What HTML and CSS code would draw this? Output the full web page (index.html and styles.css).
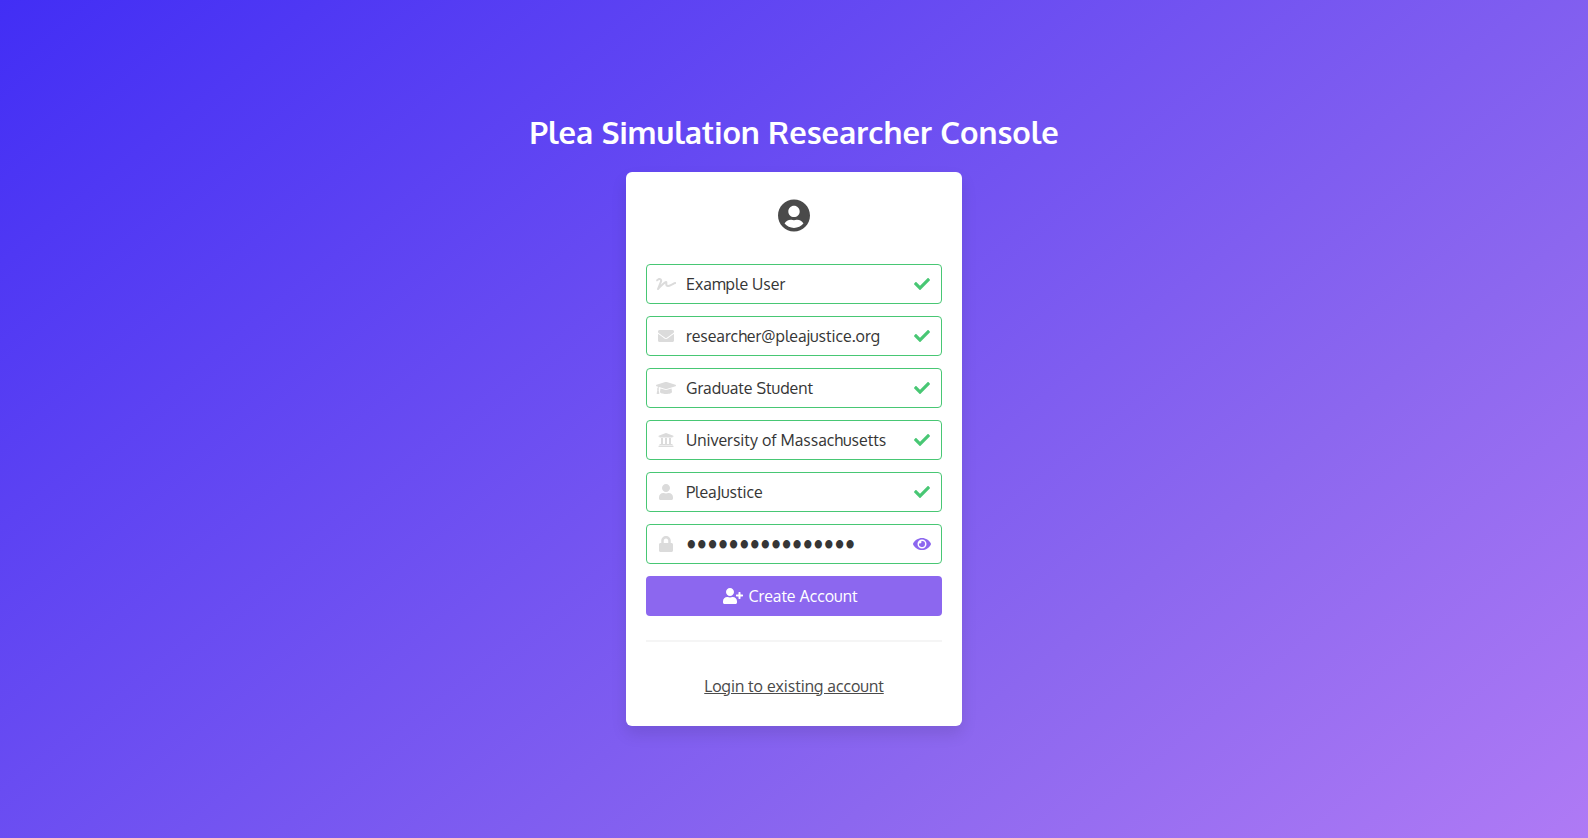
FILE: index.html
```html
<!DOCTYPE html>
<html lang="en">
<head>
<meta charset="utf-8">
<meta name="viewport" content="width=device-width, initial-scale=1">
<title>Plea Simulation Researcher Console</title>
<link rel="stylesheet" href="styles.css">
</head>
<body>
<svg class="sprite" aria-hidden="true">
  <symbol id="signature" viewBox="0 0 640 512"><path d="M623.2 192c-51.8 3.5-125.7 54.7-163.1 71.5-29.1 13.1-54.2 24.4-76.1 24.4-22.6 0-26-16.2-21.3-51.9 1.1-8 11.7-79.2-42.7-76.1-25.1 1.5-64.3 24.8-169.5 126L192 182.2c30.4-75.9-53.2-151.5-129.7-102.8L7.4 116.3C0 121-2.2 130.9 2.5 138.4l17.2 27c4.7 7.5 14.6 9.7 22.1 4.9l58-38.9c18.4-11.7 40.7 7.2 32.7 27.1L34.3 404.1C27.5 421 37 448 64 448c8.3 0 16.5-3.2 22.6-9.4 42.2-42.2 154.7-150.7 211.2-195.8-2.2 28.5-2.1 58.9 20.6 83.8 15.3 16.8 37.3 25.3 65.5 25.3 35.6 0 68-14.6 102.3-30 33-14.8 99-62.6 138.4-65.8 8.5-.7 15.2-7.3 15.2-15.8v-32.1c.2-9.1-7.5-16.8-16.6-16.2z"/></symbol>
  <symbol id="envelope" viewBox="0 0 512 512"><path d="M502.3 190.8c3.9-3.1 9.7-.2 9.7 4.7V400c0 26.5-21.5 48-48 48H48c-26.5 0-48-21.5-48-48V195.6c0-5 5.7-7.8 9.7-4.7 22.4 17.4 52.1 39.5 154.1 113.6 21.1 15.4 56.7 47.8 92.2 47.6 35.7.3 72-32.8 92.3-47.6 102-74.1 131.6-96.3 154-113.7zM256 320c23.2.4 56.6-29.2 73.4-41.4 132.7-96.3 142.8-104.7 173.4-128.7 5.8-4.5 9.2-11.5 9.2-18.9v-19c0-26.5-21.5-48-48-48H48c-26.5 0-48 21.5-48 48v19c0 7.4 3.4 14.3 9.2 18.9 30.6 23.9 40.7 32.4 173.4 128.7 16.8 12.2 50.2 41.8 73.4 41.4z"/></symbol>
  <symbol id="cap" viewBox="0 0 640 512"><path d="M622.34 153.2L343.4 67.5c-15.2-4.67-31.6-4.67-46.79 0L17.66 153.2c-23.54 7.23-23.54 38.36 0 45.59l48.63 14.94c-10.67 13.19-17.23 29.28-17.88 46.9C38.78 266.15 32 276.11 32 288c0 10.78 5.68 19.85 13.86 25.65L20.33 428.53C18.11 438.52 25.71 448 35.94 448h56.11c10.24 0 17.84-9.48 15.62-19.47L82.14 313.65C90.32 307.85 96 298.78 96 288c0-11.57-6.47-21.25-15.66-26.87.76-15.02 8.44-28.3 20.69-36.72L296.6 284.5c9.06 2.78 26.44 6.25 46.79 0l278.95-85.7c23.55-7.24 23.55-38.36 0-45.6zM352.79 315.09c-28.53 8.76-52.84 3.92-65.59 0l-145.02-44.55L128 384c0 35.35 85.96 64 192 64s192-28.65 192-64l-14.18-113.47-145.03 44.56z"/></symbol>
  <symbol id="university" viewBox="0 0 512 512"><path d="M496 128v16a8 8 0 0 1-8 8h-24v12c0 6.627-5.373 12-12 12H60c-6.627 0-12-5.373-12-12v-12H24a8 8 0 0 1-8-8v-16a8 8 0 0 1 4.941-7.392l232-88a7.996 7.996 0 0 1 6.118 0l232 88A8 8 0 0 1 496 128zm-24 304H40c-13.255 0-24 10.745-24 24v16a8 8 0 0 0 8 8h464a8 8 0 0 0 8-8v-16c0-13.255-10.745-24-24-24zM96 192v192H60c-6.627 0-12 5.373-12 12v20h416v-20c0-6.627-5.373-12-12-12h-36V192h-64v192h-64V192h-64v192h-64V192H96z"/></symbol>
  <symbol id="user" viewBox="0 0 448 512"><path d="M224 256c70.7 0 128-57.3 128-128S294.7 0 224 0 96 57.3 96 128s57.3 128 128 128zm89.6 32h-16.7c-22.2 10.2-46.9 16-72.9 16s-50.6-5.8-72.9-16h-16.7C60.2 288 0 348.2 0 422.4V464c0 26.5 21.5 48 48 48h352c26.5 0 48-21.5 48-48v-41.6c0-74.2-60.2-134.4-134.4-134.4z"/></symbol>
  <symbol id="lock" viewBox="0 0 448 512"><path d="M400 224h-24v-72C376 68.2 307.8 0 224 0S72 68.2 72 152v72H48c-26.5 0-48 21.5-48 48v192c0 26.5 21.5 48 48 48h352c26.5 0 48-21.5 48-48V272c0-26.5-21.5-48-48-48zm-104 0H152v-72c0-39.7 32.3-72 72-72s72 32.3 72 72v72z"/></symbol>
  <symbol id="check" viewBox="0 0 512 512"><path d="M173.898 439.404l-166.4-166.4c-9.997-9.997-9.997-26.206 0-36.204l36.203-36.204c9.997-9.998 26.207-9.998 36.204 0L192 312.69 432.095 72.596c9.997-9.997 26.207-9.997 36.204 0l36.203 36.204c9.997 9.997 9.997 26.206 0 36.204l-294.4 294.401c-9.998 9.997-26.207 9.997-36.204-.001z"/></symbol>
  <symbol id="eye" viewBox="0 0 576 512"><path d="M572.52 241.4C518.29 135.59 410.93 64 288 64S57.68 135.64 3.48 241.41a32.35 32.35 0 0 0 0 29.19C57.71 376.41 165.07 448 288 448s230.32-71.64 284.52-177.41a32.35 32.35 0 0 0 0-29.19zM288 400a144 144 0 1 1 144-144 143.93 143.93 0 0 1-144 144zm0-240a95.31 95.31 0 0 0-25.31 3.79 47.85 47.85 0 0 1-66.9 66.9A95.78 95.78 0 1 0 288 160z"/></symbol>
  <symbol id="user-plus" viewBox="0 0 640 512"><path d="M624 208h-64v-64c0-8.8-7.2-16-16-16h-32c-8.8 0-16 7.2-16 16v64h-64c-8.8 0-16 7.2-16 16v32c0 8.8 7.2 16 16 16h64v64c0 8.8 7.2 16 16 16h32c8.8 0 16-7.2 16-16v-64h64c8.8 0 16-7.2 16-16v-32c0-8.8-7.2-16-16-16zM224 256c70.7 0 128-57.3 128-128S294.7 0 224 0 96 57.3 96 128s57.3 128 128 128zm89.6 32h-16.7c-22.2 10.2-46.9 16-72.9 16s-50.6-5.8-72.9-16h-16.7C60.2 288 0 348.2 0 422.4V464c0 26.5 21.5 48 48 48h352c26.5 0 48-21.5 48-48v-41.6c0-74.2-60.2-134.4-134.4-134.4z"/></symbol>
  <symbol id="user-circle" viewBox="0 0 496 512"><path d="M248 8C111 8 0 119 0 256s111 248 248 248 248-111 248-248S385 8 248 8zm0 96c48.6 0 88 39.4 88 88s-39.4 88-88 88-88-39.4-88-88 39.4-88 88-88zm0 344c-58.7 0-111.3-26.6-146.5-68.2 18.8-35.4 55.6-59.8 98.5-59.8 2.4 0 4.8.4 7.1 1.1 13 4.2 26.6 6.9 40.9 6.9 14.3 0 28-2.7 40.9-6.9 2.3-.7 4.7-1.1 7.1-1.1 42.9 0 79.7 24.4 98.5 59.8C359.3 421.4 306.7 448 248 448z"/></symbol>
</svg>
<main class="hero">
  <h1 class="title">Plea Simulation Researcher Console</h1>
  <section class="box">
    <div class="avatar"><svg class="icon icon-large" aria-hidden="true"><use href="#user-circle"/></svg></div>
    <form class="form">
      <label class="field">
        <span class="slot"><svg class="icon" aria-hidden="true"><use href="#signature"/></svg></span>
        <input class="input" type="text" aria-label="Name" value="Example User">
        <span class="slot valid"><svg class="icon" aria-hidden="true"><use href="#check"/></svg></span>
      </label>
      <label class="field">
        <span class="slot"><svg class="icon" aria-hidden="true"><use href="#envelope"/></svg></span>
        <input class="input" type="email" aria-label="Email" value="researcher@pleajustice.org">
        <span class="slot valid"><svg class="icon" aria-hidden="true"><use href="#check"/></svg></span>
      </label>
      <label class="field">
        <span class="slot"><svg class="icon" aria-hidden="true"><use href="#cap"/></svg></span>
        <input class="input" type="text" aria-label="Position" value="Graduate Student">
        <span class="slot valid"><svg class="icon" aria-hidden="true"><use href="#check"/></svg></span>
      </label>
      <label class="field">
        <span class="slot"><svg class="icon" aria-hidden="true"><use href="#university"/></svg></span>
        <input class="input" type="text" aria-label="Institution" value="University of Massachusetts">
        <span class="slot valid"><svg class="icon" aria-hidden="true"><use href="#check"/></svg></span>
      </label>
      <label class="field">
        <span class="slot"><svg class="icon" aria-hidden="true"><use href="#user"/></svg></span>
        <input class="input" type="text" aria-label="Username" value="PleaJustice">
        <span class="slot valid"><svg class="icon" aria-hidden="true"><use href="#check"/></svg></span>
      </label>
      <div class="field">
        <span class="slot"><svg class="icon" aria-hidden="true"><use href="#lock"/></svg></span>
        <input class="input password" type="password" aria-label="Password" value="researchpassword">
        <button class="slot reveal" type="button" aria-label="Show password"><svg class="icon" aria-hidden="true"><use href="#eye"/></svg></button>
      </div>
      <button class="submit" type="submit"><svg class="icon" aria-hidden="true"><use href="#user-plus"/></svg>Create Account</button>
    </form>
    <hr class="rule">
    <a class="login" href="#login">Login to existing account</a>
  </section>
</main>
</body>
</html>
```
FILE: styles.css
```css
* {
  box-sizing: border-box;
}

body {
  margin: 0;
  font-family: Oxygen, "Noto Sans", "Open Sans", sans-serif;
  font-size: 16px;
  line-height: 24px;
  color: #4a4a4a;
}

.sprite {
  display: none;
}

.hero {
  min-height: 100vh;
  display: flex;
  flex-direction: column;
  align-items: center;
  justify-content: center;
  padding: 24px;
  background: linear-gradient(141deg, #422ef5 0%, #8c67ef 71%, #af7af5 100%);
}

.title {
  margin: 0 0 20px;
  font-size: 31px;
  line-height: 40px;
  font-weight: 600;
  color: #fff;
  text-align: center;
}

.box {
  width: 100%;
  max-width: 336px;
  padding: 20px;
  border-radius: 6px;
  background: #fff;
  box-shadow: 0 8px 16px rgba(10, 10, 10, 0.1);
}

.icon {
  width: 20px;
  height: 16px;
  fill: currentColor;
}

.avatar {
  display: flex;
  align-items: center;
  justify-content: center;
  height: 46px;
  margin-bottom: 26px;
}

.icon-large {
  width: 32px;
  height: 33px;
}

.form {
  display: flex;
  flex-direction: column;
  gap: 12px;
}

.field {
  display: flex;
  height: 40px;
  border: 1px solid #48c774;
  border-radius: 4px;
}

.slot {
  display: flex;
  flex: none;
  align-items: center;
  justify-content: center;
  width: 38px;
  padding: 0;
  border: 0;
  background: none;
  color: #dbdbdb;
}

.valid {
  color: #48c774;
}

.reveal {
  color: #8c67ef;
  cursor: pointer;
}

.input {
  flex: 1;
  min-width: 0;
  padding: 0 1px;
  border: 0;
  outline: 0;
  background: none;
  font: inherit;
  color: #363636;
}

.password {
  font-size: 25px;
}

.submit {
  display: flex;
  align-items: center;
  justify-content: center;
  gap: 6px;
  height: 40px;
  padding: 0 8px 0 0;
  border: 0;
  border-radius: 4px;
  background: #8c67ef;
  color: #fff;
  font: inherit;
  cursor: pointer;
}

.rule {
  height: 2px;
  margin: 24px 0;
  border: 0;
  background: #f5f5f5;
}

.login {
  display: block;
  width: fit-content;
  margin: 0 auto;
  padding: 8px 0;
  color: #4a4a4a;
  text-decoration: underline;
}
```
